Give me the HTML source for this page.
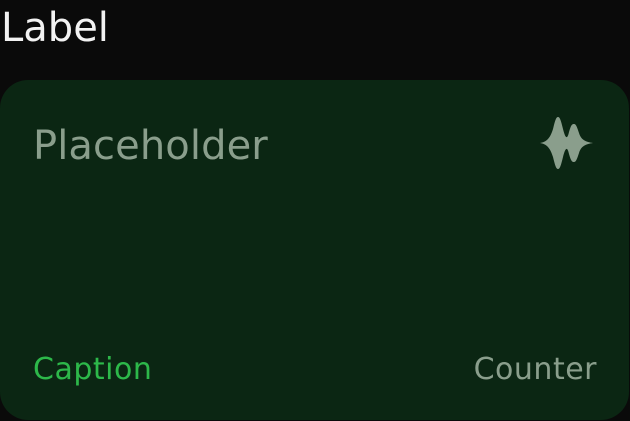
<!DOCTYPE html>
<html><head><style>
html,body{margin:0;padding:0;width:630px;height:421px;background:#0a0a0a;overflow:hidden;font-family:"DejaVu Sans","Liberation Sans",sans-serif}
.lbl{position:absolute;left:1px;top:5px;font-size:40px;color:#f2f2f2;line-height:46px}
.card{position:absolute;left:0;top:80px;width:629px;height:340px;background:#0b2613;border-radius:28px}
.ph{position:absolute;left:33px;top:123px;font-size:40px;color:#8a9e8c;line-height:46px;letter-spacing:0.1px}
.cap{position:absolute;left:33px;top:352px;font-size:30px;color:#2db84a;line-height:36px;letter-spacing:0.5px}
.cnt{position:absolute;right:33px;top:352px;font-size:30px;color:#8a9e8c;line-height:36px;letter-spacing:0.5px}
svg{position:absolute;left:538px;top:115px}
</style></head><body>
<div class="lbl">Label</div>
<div class="card"></div>
<div class="ph">Placeholder</div>
<svg width="58" height="56" viewBox="0 0 58 56">
<path fill="#8a9e8c" d="M2 28 C8 27 12 24 15 14 C17 6 18 2 20 2 C22 2 23 6 25 14 C27 22 29 26 31 17 C33 10 34 9 36 9 C38 9 39 12 41 18 C43 25 48 27 55 28 C48 29 43 31 41 38 C39 44 38 47 36 47 C34 47 33 46 31 39 C29 30 27 34 25 42 C23 50 22 54 20 54 C18 54 17 50 15 42 C12 32 8 29 2 28 Z"/>
</svg>
<div class="cap">Caption</div>
<div class="cnt">Counter</div>
</body></html>
